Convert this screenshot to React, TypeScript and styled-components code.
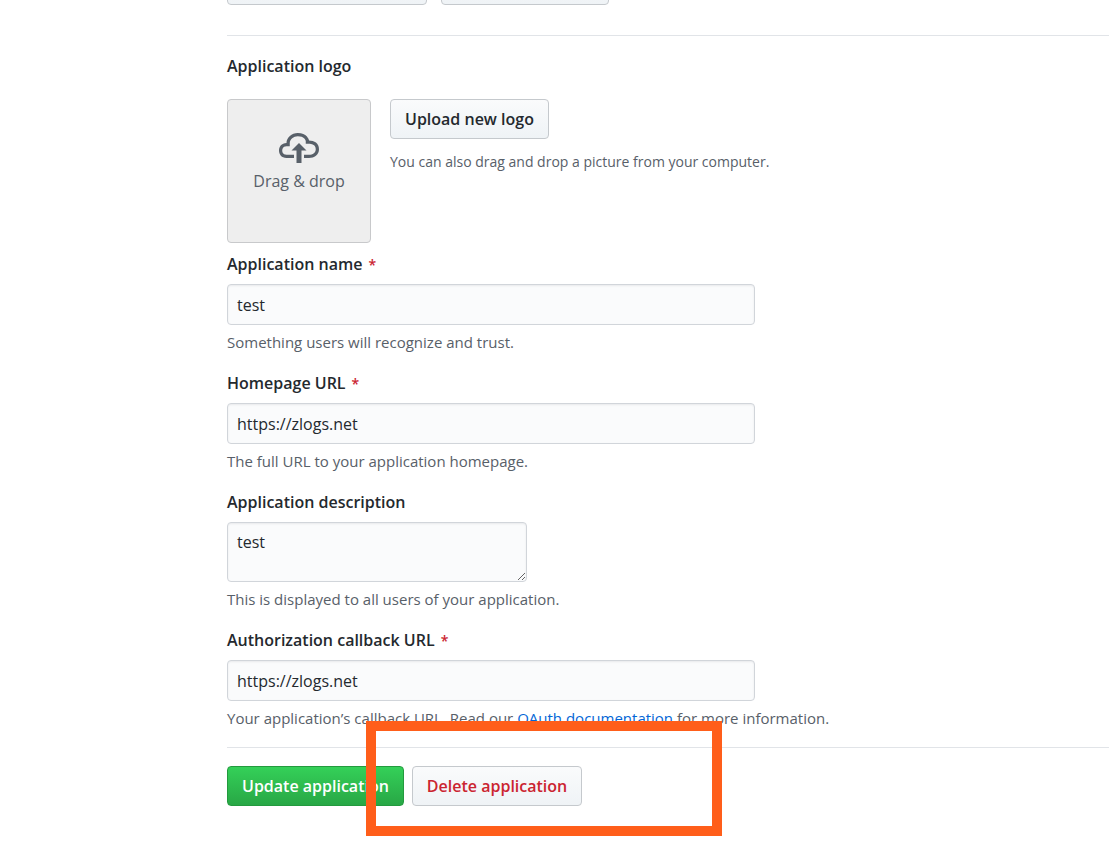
import React from "react";
import styled, { createGlobalStyle, css } from "styled-components";

const GlobalStyle = createGlobalStyle`
  *, *::before, *::after { box-sizing: border-box; }
  body {
    margin: 0;
    background: #fff;
    color: #24292e;
    font-family: "Segoe UI", "Open Sans", "Noto Sans", sans-serif;
    font-size: 16px;
    line-height: 26px;
  }
`;

const Page = styled.main`
  padding: 0 8px 40px 227px;
`;

const Divider = styled.hr<{ $top: number; $bottom: number }>`
  height: 1px;
  border: 0;
  margin: ${(p) => p.$top}px 0 ${(p) => p.$bottom}px;
  background: #e1e4e8;
`;

const tones = {
  plain: css`
    color: #24292e;
    border-color: #c5c9cd;
    background: linear-gradient(#fafbfc, #eff3f6);
  `,
  primary: css`
    color: #fff;
    border-color: #239a3e;
    background: linear-gradient(#34d058, #28a745);
  `,
  danger: css`
    color: #cb2431;
    border-color: #c5c9cd;
    background: linear-gradient(#fafbfc, #eff3f6);
  `,
};

const Button = styled.button<{ $tone?: keyof typeof tones; $width?: number }>`
  height: 40px;
  flex: none;
  padding: 0 14px;
  width: ${(p) => (p.$width ? `${p.$width}px` : "auto")};
  border: 1px solid;
  border-radius: 4px;
  font: inherit;
  font-weight: 600;
  white-space: nowrap;
  cursor: pointer;
  ${(p) => tones[p.$tone ?? "plain"]}
`;

const SecretActions = styled.div`
  display: flex;
  align-items: flex-end;
  gap: 14px;
  height: 5px;
  overflow: hidden;
`;

const Form = styled.form`
  margin: 0;
`;

const Heading = styled.h2`
  margin: 0 0 20px;
  font-size: 16px;
  line-height: 26px;
  font-weight: 600;
`;

const LogoRow = styled.div`
  display: flex;
  gap: 19px;
  margin-bottom: 8px;
`;

const DropZone = styled.div`
  display: flex;
  flex-direction: column;
  align-items: center;
  flex: none;
  width: 144px;
  height: 144px;
  padding-top: 28px;
  border: 1px solid #c8c9cb;
  border-radius: 4px;
  background: #eee;
  color: #586069;
`;

const Hint = styled.p<{ $small?: boolean }>`
  margin: 5px 0 0;
  color: #586069;
  font-size: ${(p) => (p.$small ? 14 : 15)}px;
  line-height: 24px;
`;

const UploadColumn = styled.div`
  display: flex;
  flex-direction: column;
  align-items: flex-start;
  gap: 6px;
`;

const Field = styled.div`
  margin-bottom: 16px;
`;

const Label = styled.label`
  display: block;
  width: fit-content;
  margin-bottom: 7px;
  font-weight: 600;
`;

const Required = styled.span`
  margin-left: 6px;
  color: #cb2431;
  font-size: 14px;
  line-height: 16px;
`;

const controlStyle = css`
  display: block;
  border: 1px solid #d1d5da;
  border-radius: 4px;
  background: #fafbfc;
  box-shadow: inset 0 1px 2px rgba(27, 31, 35, 0.075);
  color: #24292e;
  font: inherit;
  outline: none;
`;

const TextInput = styled.input`
  ${controlStyle}
  width: 100%;
  max-width: 528px;
  height: 41px;
  padding: 0 9px;
`;

const TextArea = styled.textarea`
  ${controlStyle}
  width: 300px;
  height: 60px;
  padding: 6px 9px;
  resize: both;
`;

const Link = styled.a`
  color: #0366d6;
  text-decoration: none;
`;

const Actions = styled.div`
  position: relative;
  display: flex;
  gap: 8px;
`;

const Highlight = styled.div`
  position: absolute;
  top: -45px;
  left: 139px;
  width: 356px;
  height: 115px;
  border: 10px solid #ff5e1a;
  pointer-events: none;
`;

const CloudUpload = () => (
  <svg width="40" height="40" viewBox="0 0 16 16" fill="currentColor" aria-hidden="true">
    <path
      fillRule="evenodd"
      d="M7 9H5l3-3 3 3H9v5H7V9zm5-4c0-.44-.91-3-4.5-3C5.08 2 3 3.92 3 6 1.02 6 0 7.52 0 9c0 1.53 1 3 3 3h3v-1.3H3c-1.62 0-1.7-1.42-1.7-1.7 0-.17.05-1.7 1.7-1.7h1.3V6c0-1.39 1.56-2.7 3.2-2.7 2.55 0 3.13 1.55 3.2 1.8v1.2H12c.81 0 2.7.22 2.7 2.2 0 2.09-2.25 2.2-2.7 2.2h-2V12h2c2.08 0 4-1.16 4-3.5C16 6.06 14.08 5 12 5z"
    />
  </svg>
);

export default function App() {
  return (
    <>
      <GlobalStyle />
      <Page>
        <SecretActions>
          <Button type="button" $width={200} aria-label="Revoke all user tokens" />
          <Button type="button" $width={168} aria-label="Reset client secret" />
        </SecretActions>
        <Divider $top={30} $bottom={17} />
        <Form onSubmit={(e) => e.preventDefault()}>
          <Heading>Application logo</Heading>
          <LogoRow>
            <DropZone>
              <CloudUpload />
              <span>Drag &amp; drop</span>
            </DropZone>
            <UploadColumn>
              <Button type="button">Upload new logo</Button>
              <Hint $small>You can also drag and drop a picture from your computer.</Hint>
            </UploadColumn>
          </LogoRow>
          <Field>
            <Label htmlFor="name">
              Application name<Required>*</Required>
            </Label>
            <TextInput id="name" type="text" defaultValue="test" />
            <Hint>Something users will recognize and trust.</Hint>
          </Field>
          <Field>
            <Label htmlFor="homepage">
              Homepage URL<Required>*</Required>
            </Label>
            <TextInput id="homepage" type="text" defaultValue="https://zlogs.net" />
            <Hint>The full URL to your application homepage.</Hint>
          </Field>
          <Field>
            <Label htmlFor="description">Application description</Label>
            <TextArea id="description" defaultValue="test" />
            <Hint>This is displayed to all users of your application.</Hint>
          </Field>
          <Field>
            <Label htmlFor="callback">
              Authorization callback URL<Required>*</Required>
            </Label>
            <TextInput id="callback" type="text" defaultValue="https://zlogs.net" />
            <Hint>
              Your application’s callback URL. Read our <Link href="#oauth">OAuth documentation</Link> for more
              information.
            </Hint>
          </Field>
          <Divider $top={17} $bottom={18} />
          <Actions>
            <Button type="submit" $tone="primary">
              Update application
            </Button>
            <Button type="button" $tone="danger">
              Delete application
            </Button>
            <Highlight />
          </Actions>
        </Form>
      </Page>
    </>
  );
}
